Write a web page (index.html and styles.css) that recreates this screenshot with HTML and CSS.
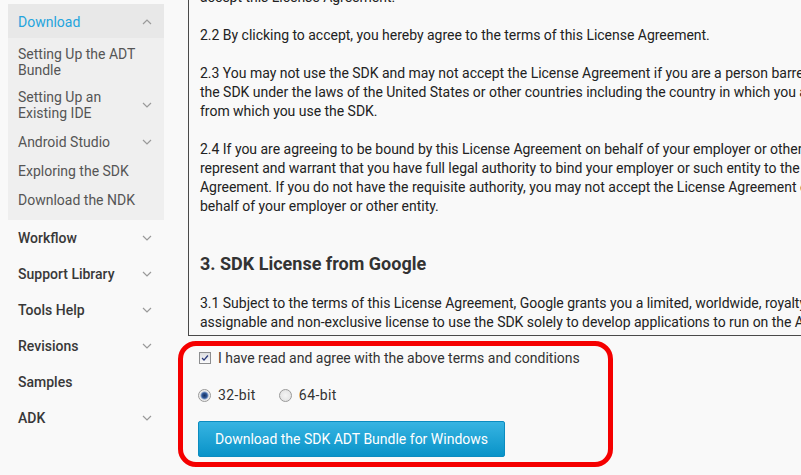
FILE: index.html
```html
<!DOCTYPE html>
<html lang="en">
<head>
    <meta charset="UTF-8">
    <title>Download the SDK</title>
    <link rel="stylesheet" href="styles.css">
</head>
<body>
    <div class="page">
        <nav class="sidebar">
            <div class="nav-open">
                <div class="nav-head">
                    <span>Download</span>
                    <svg class="chev" width="10" height="6" viewBox="0 0 10 6"><polyline points="1,5 5,1 9,5"/></svg>
                </div>
                <ul class="nav-sub">
                    <li><span class="label">Setting Up the ADT Bundle</span></li>
                    <li><span class="label">Setting Up an Existing IDE</span>
                        <svg class="chev" width="10" height="6" viewBox="0 0 10 6"><polyline points="1,1 5,5 9,1"/></svg></li>
                    <li><span class="label">Android Studio</span>
                        <svg class="chev" width="10" height="6" viewBox="0 0 10 6"><polyline points="1,1 5,5 9,1"/></svg></li>
                    <li><span class="label">Exploring the SDK</span></li>
                    <li><span class="label">Download the NDK</span></li>
                </ul>
            </div>
            <ul class="nav-main">
                <li>Workflow <svg class="chev" width="10" height="6" viewBox="0 0 10 6"><polyline points="1,1 5,5 9,1"/></svg></li>
                <li>Support Library <svg class="chev" width="10" height="6" viewBox="0 0 10 6"><polyline points="1,1 5,5 9,1"/></svg></li>
                <li>Tools Help <svg class="chev" width="10" height="6" viewBox="0 0 10 6"><polyline points="1,1 5,5 9,1"/></svg></li>
                <li>Revisions <svg class="chev" width="10" height="6" viewBox="0 0 10 6"><polyline points="1,1 5,5 9,1"/></svg></li>
                <li>Samples</li>
                <li>ADK <svg class="chev" width="10" height="6" viewBox="0 0 10 6"><polyline points="1,1 5,5 9,1"/></svg></li>
            </ul>
        </nav>

        <div class="content">
            <div class="terms">
                <div class="terms-text">
                    <p class="first">2.1 In order to use the SDK, you must first agree to this License Agreement. You may not use the SDK if you do not<br>accept this License Agreement.</p>
                    <p>2.2 By clicking to accept, you hereby agree to the terms of this License Agreement.</p>
                    <p>2.3 You may not use the SDK and may not accept the License Agreement if you are a person barred from receiving<br>the SDK under the laws of the United States or other countries including the country in which you are resident or<br>from which you use the SDK.</p>
                    <p>2.4 If you are agreeing to be bound by this License Agreement on behalf of your employer or other entity, you<br>represent and warrant that you have full legal authority to bind your employer or such entity to the License<br>Agreement. If you do not have the requisite authority, you may not accept the License Agreement or use the SDK on<br>behalf of your employer or other entity.</p>
                    <h2>3. SDK License from Google</h2>
                    <p>3.1 Subject to the terms of this License Agreement, Google grants you a limited, worldwide, royalty-free, non-<br>assignable and non-exclusive license to use the SDK solely to develop applications to run on the Android platform.</p>
                    <p>3.2 You agree that Google or third parties own all legal right, title and interest in and to the SDK.</p>
                </div>
            </div>

            <form class="accept" onsubmit="event.preventDefault();">
                <label class="check-row">
                    <input type="checkbox" checked>
                    <span>I have read and agree with the above terms and conditions</span>
                </label>
                <div class="bits">
                    <label><input type="radio" name="bit" checked> <span>32-bit</span></label>
                    <label><input type="radio" name="bit"> <span>64-bit</span></label>
                </div>
                <button type="submit" class="download-button">Download the SDK ADT Bundle for Windows</button>
            </form>
        </div>
    </div>
</body>
</html>
```

FILE: styles.css
```css
body {
    margin: 0;
    background-color: #f9f9f9;
    color: #222;
    font-family: Roboto, "Open Sans", Arial, sans-serif;
    overflow: hidden;
}
ul {
    list-style: none;
    margin: 0;
    padding: 0;
}
.page {
    display: flex;
    gap: 14px;
}

/* left navigation */
.sidebar {
    width: 156px;
    flex-shrink: 0;
    margin-left: 8px;
    padding-top: 4px;
    font-size: 14px;
    line-height: 16px;
}
.chev {
    flex-shrink: 0;
    fill: none;
    stroke: #9a9a9a;
    stroke-width: 1.2;
}
.nav-open {
    background-color: #efefef;
    padding-bottom: 5px;
}
.nav-head {
    display: flex;
    justify-content: space-between;
    align-items: center;
    padding: 10px 12px 8px 10px;
    background-color: #e8e8e8;
    color: #25a4dd;
}
.nav-sub li {
    display: flex;
    justify-content: space-between;
    align-items: center;
    padding: 6px 12px 7px 10px;
    color: #555;
}
.nav-sub li:first-child {
    padding-top: 8px;
    padding-bottom: 5px;
}
.nav-sub .label {
    width: 122px;
}
.nav-main li {
    display: flex;
    justify-content: space-between;
    align-items: center;
    padding: 10px 12px 10px 10px;
    color: #383838;
    font-weight: 500;
}

/* license text box */
.content {
    flex: none;
    width: 960px;
}
.terms {
    margin-left: 10px;
    height: 335px;
    overflow: hidden;
    border: 1px solid #4a4a4a;
    border-top: 0;
    padding: 0 11px;
}
.terms-text {
    margin-top: -31px;
}
.terms p {
    margin: 19px 0;
    font-size: 14px;
    line-height: 19px;
    letter-spacing: -0.02px;
    white-space: nowrap;
}
.terms p.first {
    margin-top: 0;
}
.terms h2 {
    margin: 37px 0 19px;
    font-size: 18px;
    line-height: 22px;
    font-weight: 700;
    color: #333;
}

/* accept form, circled in red */
.accept {
    box-sizing: border-box;
    width: 435px;
    margin-top: 5px;
    padding: 0 15px 5px;
    border: 5px solid #f50000;
    border-radius: 18px;
    font-size: 14px;
    color: #333;
}
.check-row {
    display: flex;
    align-items: center;
    gap: 7px;
    height: 24px;
}
.check-row input {
    appearance: none;
    margin: 0 0 0 1px;
    width: 12px;
    height: 12px;
    border: 1px solid #8c8d8f;
    background: linear-gradient(#dcdde0, #fbfbfc);
}
.check-row input:checked {
    background: url("data:image/svg+xml,%3Csvg xmlns='http://www.w3.org/2000/svg' viewBox='0 0 12 12'%3E%3Cpath d='M2.5 6l2.3 2.5L9.5 3' fill='none' stroke='%2328387a' stroke-width='1.6'/%3E%3C/svg%3E") center / 10px 10px no-repeat, linear-gradient(#dcdde0, #fbfbfc);
}
.bits {
    display: flex;
    align-items: center;
    height: 24px;
    margin-top: 13px;
}
.bits label {
    display: flex;
    align-items: center;
    gap: 7px;
    letter-spacing: 0.4px;
}
.bits label + label {
    margin-left: 23px;
}
.bits input {
    appearance: none;
    margin: 0;
    width: 13px;
    height: 13px;
    border: 1px solid #9a9a9a;
    border-radius: 50%;
    background: radial-gradient(circle, #f4f4f4 0, #dedede 100%);
}
.bits input:checked {
    background: radial-gradient(circle, #17305f 0, #2f5898 2.6px, #8ca4cc 3.6px, #e6e6e6 4.4px, #f7f7f7 6px);
}
.download-button {
    display: block;
    width: 307px;
    height: 36px;
    margin-top: 14px;
    padding: 0;
    border: 1px solid #0b8cc0;
    border-radius: 2px;
    background: linear-gradient(#37b4e2, #0993c8);
    color: white;
    font-family: Roboto, "Open Sans", Arial, sans-serif;
    font-size: 14px;
    cursor: pointer;
}
```
